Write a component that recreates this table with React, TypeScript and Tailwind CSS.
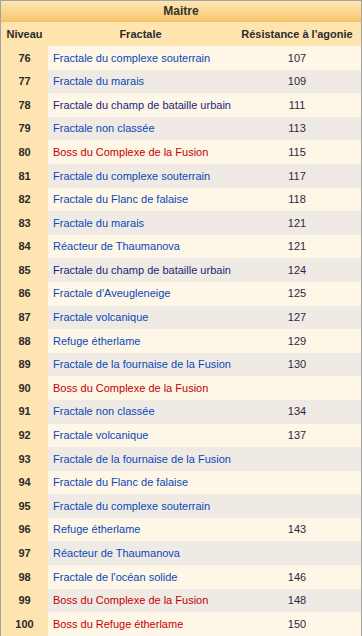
const rows: [number, string, string, 'blue' | 'navy' | 'red'][] = [
  [76, 'Fractale du complexe souterrain', '107', 'blue'],
  [77, 'Fractale du marais', '109', 'blue'],
  [78, 'Fractale du champ de bataille urbain', '111', 'navy'],
  [79, 'Fractale non classée', '113', 'blue'],
  [80, 'Boss du Complexe de la Fusion', '115', 'red'],
  [81, 'Fractale du complexe souterrain', '117', 'blue'],
  [82, 'Fractale du Flanc de falaise', '118', 'blue'],
  [83, 'Fractale du marais', '121', 'blue'],
  [84, 'Réacteur de Thaumanova', '121', 'blue'],
  [85, 'Fractale du champ de bataille urbain', '124', 'navy'],
  [86, "Fractale d'Aveugleneige", '125', 'blue'],
  [87, 'Fractale volcanique', '127', 'blue'],
  [88, 'Refuge étherlame', '129', 'blue'],
  [89, 'Fractale de la fournaise de la Fusion', '130', 'blue'],
  [90, 'Boss du Complexe de la Fusion', '', 'red'],
  [91, 'Fractale non classée', '134', 'blue'],
  [92, 'Fractale volcanique', '137', 'blue'],
  [93, 'Fractale de la fournaise de la Fusion', '', 'blue'],
  [94, 'Fractale du Flanc de falaise', '', 'blue'],
  [95, 'Fractale du complexe souterrain', '', 'blue'],
  [96, 'Refuge étherlame', '143', 'blue'],
  [97, 'Réacteur de Thaumanova', '', 'blue'],
  [98, "Fractale de l'océan solide", '146', 'blue'],
  [99, 'Boss du Complexe de la Fusion', '148', 'red'],
  [100, 'Boss du Refuge étherlame', '150', 'red'],
];

const linkColor = {
  blue: 'text-[#0b48b8]',
  navy: 'text-[#1c1f7a]',
  red: 'text-[#c40000]',
};

export default function App() {
  return (
    <div className="w-[362px] h-[636px] bg-white font-['Liberation_Sans',Arial,sans-serif] text-[11px] text-[#333]">
      <div className="border-x border-t border-[#a3a3a3] border-b border-b-[#3a3a3a]">
        {/* titre */}
        <div className="h-[21px] flex items-center justify-center font-bold text-[12px] bg-gradient-to-b from-[#fde6b3] to-[#f8c76c] border-b border-[#f0c070]">
          Maitre
        </div>

        {/* en-tête */}
        <div className="grid grid-cols-[47px_185px_1fr] h-[24px] bg-[#fee5b0] font-bold text-[#2b2b2b]">
          <div className="flex items-center justify-center">Niveau</div>
          <div className="flex items-center justify-center">Fractale</div>
          <div className="flex items-center justify-center">Résistance à l'agonie</div>
        </div>

        {rows.map(([lvl, name, ar, color], i) => (
          <div
            key={lvl}
            className={`grid grid-cols-[47px_185px_1fr] h-[23.6px] ${i % 2 === 0 ? 'bg-[#fef6e6]' : 'bg-[#efebe4]'}`}
          >
            <div className="flex items-center justify-center bg-[#fee4b1] font-bold text-[#2b2b2b]">{lvl}</div>
            <div className={`flex items-center pl-[5px] whitespace-nowrap ${linkColor[color]}`}>{name}</div>
            <div className="flex items-center justify-center text-[#2e2845]">{ar}</div>
          </div>
        ))}
      </div>
    </div>
  );
}
